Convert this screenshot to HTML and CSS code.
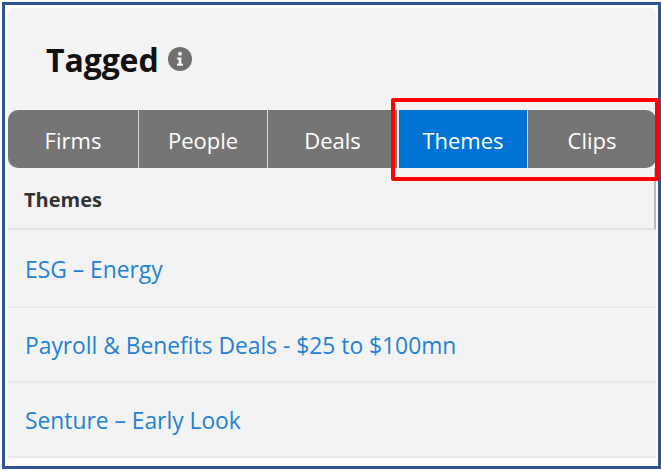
FILE: index.html
```html
<!DOCTYPE html>
<html lang="en">
<head>
<meta charset="utf-8">
<title>Tagged</title>
<link rel="stylesheet" href="styles.css">
</head>
<body>
<main class="frame">
  <section class="panel">
    <header class="head">
      <h1 class="title">Tagged</h1>
      <svg class="info" viewBox="0 0 24 24" aria-hidden="true">
        <circle cx="12" cy="12" r="12" fill="#6f6f6f"/>
        <circle cx="12" cy="6.8" r="2" fill="#f3f3f3"/>
        <path d="M9 10.4h4.4v6.4H15v2H9v-2h1.6v-4.4H9z" fill="#f3f3f3"/>
      </svg>
    </header>
    <nav class="tabs">
      <a class="tab">Firms</a>
      <a class="tab">People</a>
      <a class="tab">Deals</a>
      <a class="tab active">Themes</a>
      <a class="tab">Clips</a>
    </nav>
    <div class="table-head"><span>Themes</span></div>
    <ul class="rows">
      <li class="row"><a>ESG – Energy</a></li>
      <li class="row"><a>Payroll &amp; Benefits Deals - $25 to $100mn</a></li>
      <li class="row"><a>Senture – Early Look</a></li>
    </ul>
  </section>
  <div class="callout"></div>
</main>
</body>
</html>
```
FILE: styles.css
```css
* { box-sizing: border-box; }
html, body { margin: 0; padding: 0; background: #fff; }
body { width: 661px; height: 471px; overflow: hidden; font-family: "Open Sans", "Noto Sans", sans-serif; }
.frame { position: relative; width: 659px; height: 467px; margin: 2px 0 0 2px; border: 3px solid #2f5597; padding: 3px 1px 0 3px; background: #fff; }
.panel { width: 648px; height: 450px; background: #f3f3f3; border-radius: 6px 6px 0 0; display: flex; flex-direction: column; }
.head { height: 102px; padding: 2px 0 0 38px; display: flex; align-items: center; gap: 9px; }
.title { margin: 0; font-size: 32px; font-weight: 700; letter-spacing: -0.1px; color: #111; line-height: 1; }
.info { width: 24px; height: 24px; margin-top: -3px; }
.tabs { height: 58px; display: grid; grid-template-columns: 131px 129px 130px 130px 128px; background: #757575; border-radius: 10px; overflow: hidden; }
.tab { display: flex; align-items: center; justify-content: center; padding-top: 2px; color: #fff; font-size: 22px; border-right: 1px solid #d8d8d8; }
.tab:last-child { border-right: 0; }
.tab.active { background: #0074d4; border-left: 1px solid #e8e8e8; }
.table-head { height: 62px; display: flex; align-items: center; padding-left: 16px; border-bottom: 2px solid #e2e2e2; border-right: 2px solid #b9b9b9; }
.table-head span { font-size: 20px; font-weight: 700; color: #333; margin-top: 2px; }
.rows { list-style: none; margin: 3px 0 0; padding: 0; }
.row { height: 75px; display: flex; align-items: center; padding: 2px 0 0 17px; border-bottom: 2px solid #e9e9e9; font-size: 22.8px; color: #1f82d8; }
.row:first-child { padding: 0 0 1px 17px; }
.callout { position: absolute; left: 386px; top: 93px; width: 268px; height: 83px; border: 4px solid #ff0000; border-radius: 2px; }
```
